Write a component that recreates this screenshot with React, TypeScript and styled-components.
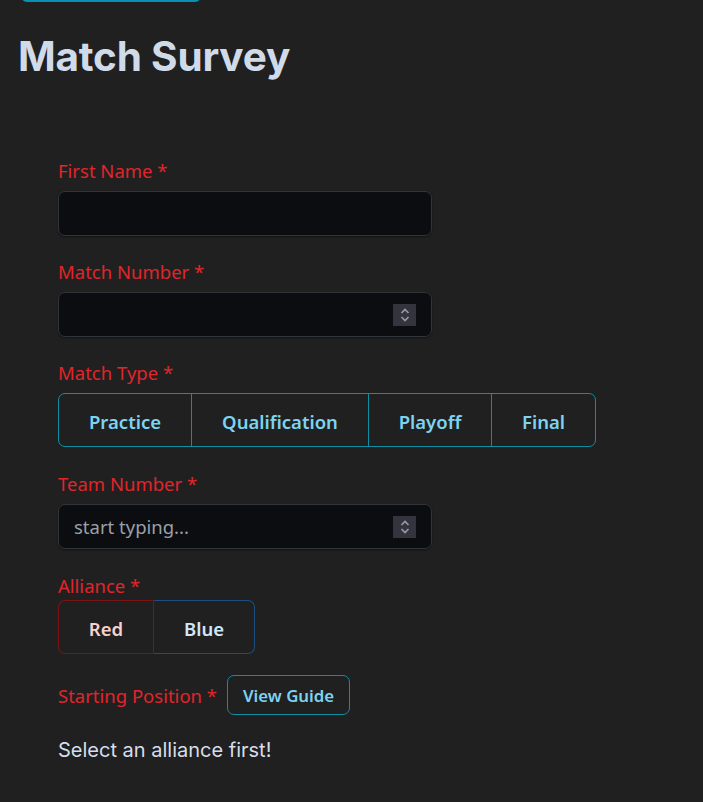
import React, { useState } from "react";
import styled, { createGlobalStyle } from "styled-components";

const GlobalStyle = createGlobalStyle`
  html, body {
    margin: 0;
    padding: 0;
    background: #202020;
  }
  body {
    font-family: "Noto Sans", "Open Sans", sans-serif;
    overflow: hidden;
  }
`;

const Page = styled.div`
  padding: 0 18px 40px 18px;
  min-height: 802px;
  box-sizing: border-box;
  background: #202020;
`;

const BackButton = styled.button`
  display: block;
  width: 180px;
  height: 40px;
  margin: -38px 0 0 3px;
  background: transparent;
  border: 2px solid #0891b2;
  border-radius: 6px;
`;

const Title = styled.h1`
  margin: 31px 0 0 0;
  font-family: Inter, "Liberation Sans", sans-serif;
  font-weight: 700;
  font-size: 40.5px;
  line-height: 48px;
  color: #d0dbea;
  letter-spacing: -0.2px;
`;

const Form = styled.form`
  margin: 76px 0 0 40px;
  display: flex;
  flex-direction: column;
`;

const Field = styled.div<{ $gap?: number; $bottom?: number }>`
  display: flex;
  flex-direction: column;
  gap: ${(p) => p.$gap ?? 7}px;
  margin-bottom: ${(p) => p.$bottom ?? 22}px;
`;

const LabelRow = styled.div`
  display: flex;
  align-items: center;
  gap: 10px;
`;

const Label = styled.label`
  font-size: 18.5px;
  line-height: 27px;
  color: #e0252b;
`;

const InputWrap = styled.div`
  position: relative;
  width: 374px;
  height: 45px;
  box-sizing: border-box;
  background: #0c0d10;
  border: 1px solid #30343b;
  border-radius: 7px;
  box-shadow: 0 1px 2px rgba(0, 0, 0, 0.4);
`;

const TextInput = styled.input`
  width: 100%;
  height: 100%;
  box-sizing: border-box;
  background: transparent;
  border: none;
  outline: none;
  padding: 0 15px;
  font-family: "Noto Sans", sans-serif;
  font-size: 18.5px;
  color: #d8dee8;
  &::placeholder {
    color: #9aa0a8;
  }
`;

const Spinner = styled.div`
  position: absolute;
  right: 15px;
  top: 11px;
  width: 23px;
  height: 22px;
  background: #34343f;
  display: flex;
  align-items: center;
  justify-content: center;
`;

const Group = styled.div<{ $border: string }>`
  display: inline-flex;
  align-self: flex-start;
  height: 54px;
  box-sizing: border-box;
  border: 1px solid ${(p) => p.$border};
  border-radius: 7px;
  overflow: hidden;
`;

const SegButton = styled.button<{ $width: number; $color: string; $divider?: string }>`
  width: ${(p) => p.$width}px;
  height: 100%;
  padding: 2px 0 0 0;
  background: transparent;
  border: none;
  border-left: 1px solid ${(p) => p.$divider ?? "transparent"};
  font-family: "Noto Sans", sans-serif;
  font-weight: 600;
  font-size: 18.5px;
  color: ${(p) => p.$color};
  cursor: pointer;
  &:first-child {
    border-left: none;
  }
`;

const AllianceButton = styled.button<{ $width: number; $color: string; $border: string }>`
  width: ${(p) => p.$width}px;
  height: 54px;
  padding: 2px 0 0 0;
  background: transparent;
  border: 1px solid ${(p) => p.$border};
  font-family: "Noto Sans", sans-serif;
  font-weight: 600;
  font-size: 18.5px;
  color: ${(p) => p.$color};
  cursor: pointer;
  &:first-child {
    border-radius: 7px 0 0 7px;
    border-right: 1px solid #2f3540;
  }
  &:last-child {
    border-radius: 0 7px 7px 0;
    border-left: none;
  }
`;

const AllianceRow = styled.div`
  display: flex;
`;

const GuideButton = styled.button`
  height: 40px;
  padding: 0 15px;
  background: transparent;
  border: 1px solid #0e8ea3;
  border-radius: 7px;
  font-family: "Noto Sans", sans-serif;
  font-weight: 600;
  font-size: 16.8px;
  color: #7dd3f0;
  cursor: pointer;
`;

const Hint = styled.p`
  margin: 22px 0 0 0;
  font-family: Inter, "Liberation Sans", sans-serif;
  font-size: 20px;
  line-height: 26px;
  color: #d5deea;
`;

const SpinIcon = () => (
  <svg width="12" height="16" viewBox="0 0 12 16" fill="none">
    <path d="M2.5 6 L6 2.5 L9.5 6" stroke="#9a9aa6" strokeWidth="1.6" />
    <path d="M2.5 10 L6 13.5 L9.5 10" stroke="#9a9aa6" strokeWidth="1.6" />
  </svg>
);

const matchTypes = [
  { name: "Practice", width: 132 },
  { name: "Qualification", width: 177 },
  { name: "Playoff", width: 123 },
  { name: "Final", width: 104 },
];

export default function App() {
  const [name, setName] = useState("");
  const [matchNo, setMatchNo] = useState("");
  const [team, setTeam] = useState("");

  return (
    <Page>
      <GlobalStyle />
      <BackButton aria-label="back" />
      <Title>Match Survey</Title>
      <Form onSubmit={(e) => e.preventDefault()}>
        <Field>
          <Label>First Name *</Label>
          <InputWrap>
            <TextInput value={name} onChange={(e) => setName(e.target.value)} />
          </InputWrap>
        </Field>
        <Field>
          <Label>Match Number *</Label>
          <InputWrap>
            <TextInput value={matchNo} onChange={(e) => setMatchNo(e.target.value)} />
            <Spinner>
              <SpinIcon />
            </Spinner>
          </InputWrap>
        </Field>
        <Field $bottom={23}>
          <Label>Match Type *</Label>
          <Group $border="#0e8ea3">
            {matchTypes.map((t) => (
              <SegButton key={t.name} type="button" $width={t.width} $color="#7dd3f0" $divider="#0e8ea3">
                {t.name}
              </SegButton>
            ))}
          </Group>
        </Field>
        <Field $bottom={23}>
          <Label>Team Number *</Label>
          <InputWrap>
            <TextInput
              placeholder="start typing..."
              value={team}
              onChange={(e) => setTeam(e.target.value)}
            />
            <Spinner>
              <SpinIcon />
            </Spinner>
          </InputWrap>
        </Field>
        <Field $gap={1} $bottom={21}>
          <Label>Alliance *</Label>
          <AllianceRow>
            <AllianceButton type="button" $width={96} $color="#f8d0d0" $border="#7a1414">
              Red
            </AllianceButton>
            <AllianceButton type="button" $width={101} $color="#d2e6fa" $border="#1c4e82">
              Blue
            </AllianceButton>
          </AllianceRow>
        </Field>
        <LabelRow>
          <Label>Starting Position *</Label>
          <GuideButton type="button">View Guide</GuideButton>
        </LabelRow>
        <Hint>Select an alliance first!</Hint>
      </Form>
    </Page>
  );
}
